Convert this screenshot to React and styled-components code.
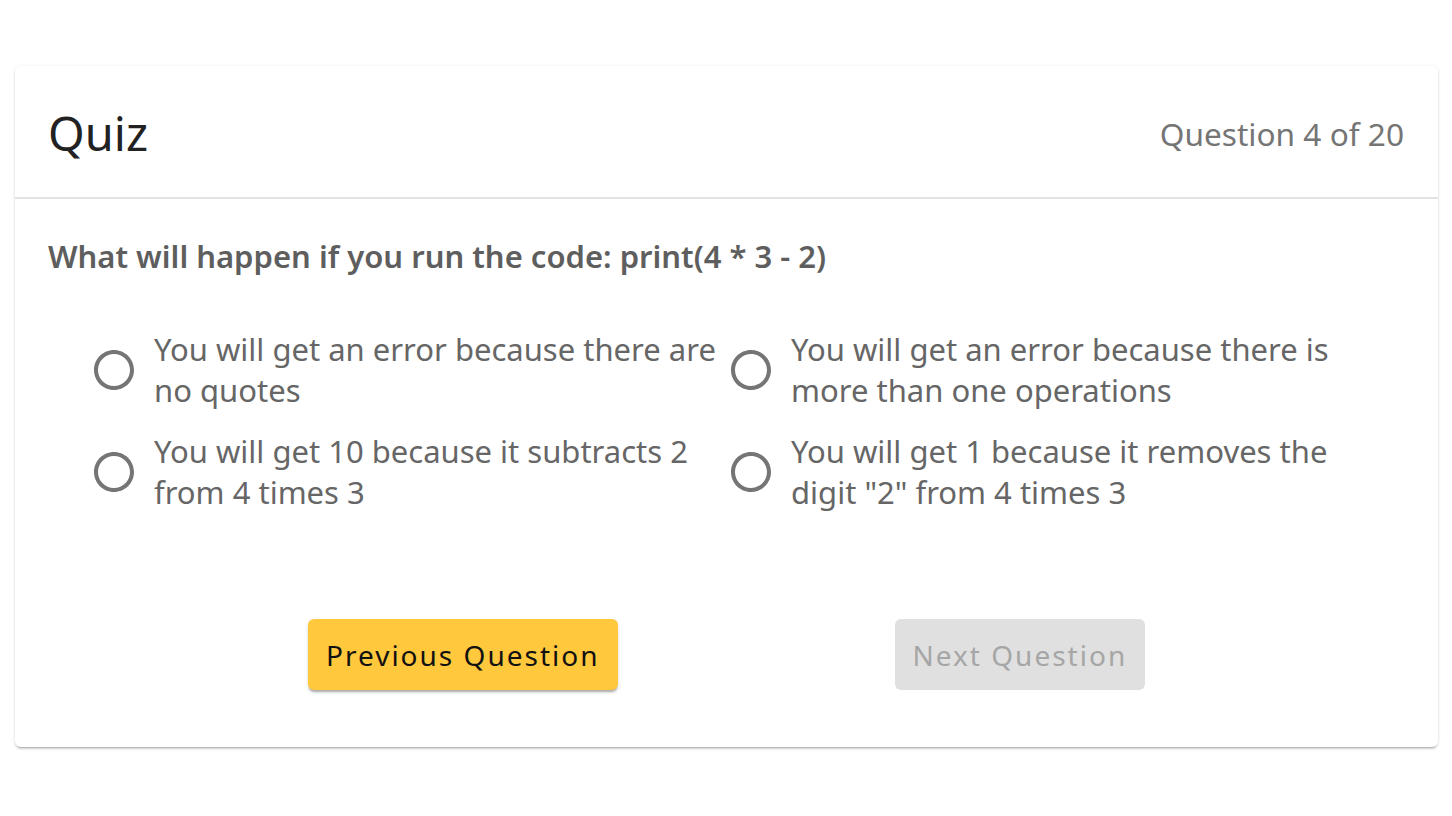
import React from "react";
import styled, { createGlobalStyle } from "styled-components";

const Global = createGlobalStyle`
  html, body { margin: 0; padding: 0; background: #ffffff; }
  body { font-family: "Noto Sans", "Open Sans", sans-serif; }
  * { box-sizing: border-box; }
`;

const Page = styled.div`
  width: 1452px;
  height: 816px;
  padding: 66px 14px 0 15px;
`;

const Card = styled.div`
  background: #fff;
  border-radius: 6px;
  box-shadow: 0 3px 2px -2px rgba(0,0,0,0.22), 0 2px 3px rgba(0,0,0,0.12), 0 0 4px rgba(0,0,0,0.06);
  padding-bottom: 57px;
`;

const Header = styled.div`
  height: 133px;
  display: flex;
  align-items: center;
  justify-content: space-between;
  padding: 3px 34px 0 33px;
  border-bottom: 2px solid #e3e3e3;
`;

const Title = styled.h1`
  margin: 0;
  font-size: 47px;
  font-weight: 400;
  color: #222;
  line-height: 1;
`;

const Counter = styled.span`
  font-size: 31.6px;
  color: #757575;
`;

const Body = styled.div`
  padding: 37px 33px 0 33px;
`;

const QuestionText = styled.p`
  margin: 0;
  font-size: 31px;
  line-height: 40px;
  font-weight: 600;
  color: #5e5e5e;
`;

const Options = styled.div`
  display: grid;
  grid-template-columns: 637px 637px;
  row-gap: 20px;
  margin: 53px 0 0 42px;
`;

const Option = styled.label`
  display: flex;
  align-items: center;
  gap: 16px;
  cursor: pointer;
`;

const RadioIcon = styled.svg`
  flex: 0 0 48px;
  width: 48px;
  height: 48px;
  color: #757575;
`;

const OptionText = styled.span`
  font-size: 31px;
  line-height: 41px;
  color: #666;
  width: 573px;
`;

const Actions = styled.div`
  display: flex;
  gap: 277px;
  margin-top: 106px;
  padding-left: 260px;
`;

const Button = styled.button`
  height: 71px;
  border: none;
  border-radius: 6px;
  font-family: inherit;
  font-size: 28px;
  letter-spacing: 2px;
  padding: 0 18px;
  background: ${(p) => (p.$disabled ? "#e0e0e0" : "#ffc83d")};
  color: ${(p) => (p.$disabled ? "#a6a6a6" : "#111")};
  box-shadow: ${(p) =>
    p.$disabled ? "none" : "0 3px 2px -1px rgba(0,0,0,0.25), 0 2px 4px rgba(0,0,0,0.12)"};
  cursor: ${(p) => (p.$disabled ? "default" : "pointer")};
`;

const Radio = () => (
  <RadioIcon viewBox="0 0 24 24">
    <path
      fill="currentColor"
      d="M12 2C6.48 2 2 6.480 2 12s4.48 10 10 10 10-4.48 10-10S17.52 2 12 2zm0 18c-4.42 0-8-3.58-8-8s3.58-8 8-8 8 3.58 8 8-3.580 8-8 8z"
    />
  </RadioIcon>
);

const options = [
  "You will get an error because there are no quotes",
  "You will get an error because there is more than one operations",
  "You will get 10 because it subtracts 2 from 4 times 3",
  'You will get 1 because it removes the digit "2" from 4 times 3',
];

export default function App() {
  return (
    <>
      <Global />
      <Page>
        <Card>
          <Header>
            <Title>Quiz</Title>
            <Counter>Question 4 of 20</Counter>
          </Header>
          <Body>
            <QuestionText>What will happen if you run the code: print(4 * 3 - 2)</QuestionText>
            <Options>
              {options.map((o) => (
                <Option key={o}>
                  <Radio />
                  <OptionText>{o}</OptionText>
                </Option>
              ))}
            </Options>
            <Actions>
              <Button>Previous Question</Button>
              <Button $disabled>Next Question</Button>
            </Actions>
          </Body>
        </Card>
      </Page>
    </>
  );
}
